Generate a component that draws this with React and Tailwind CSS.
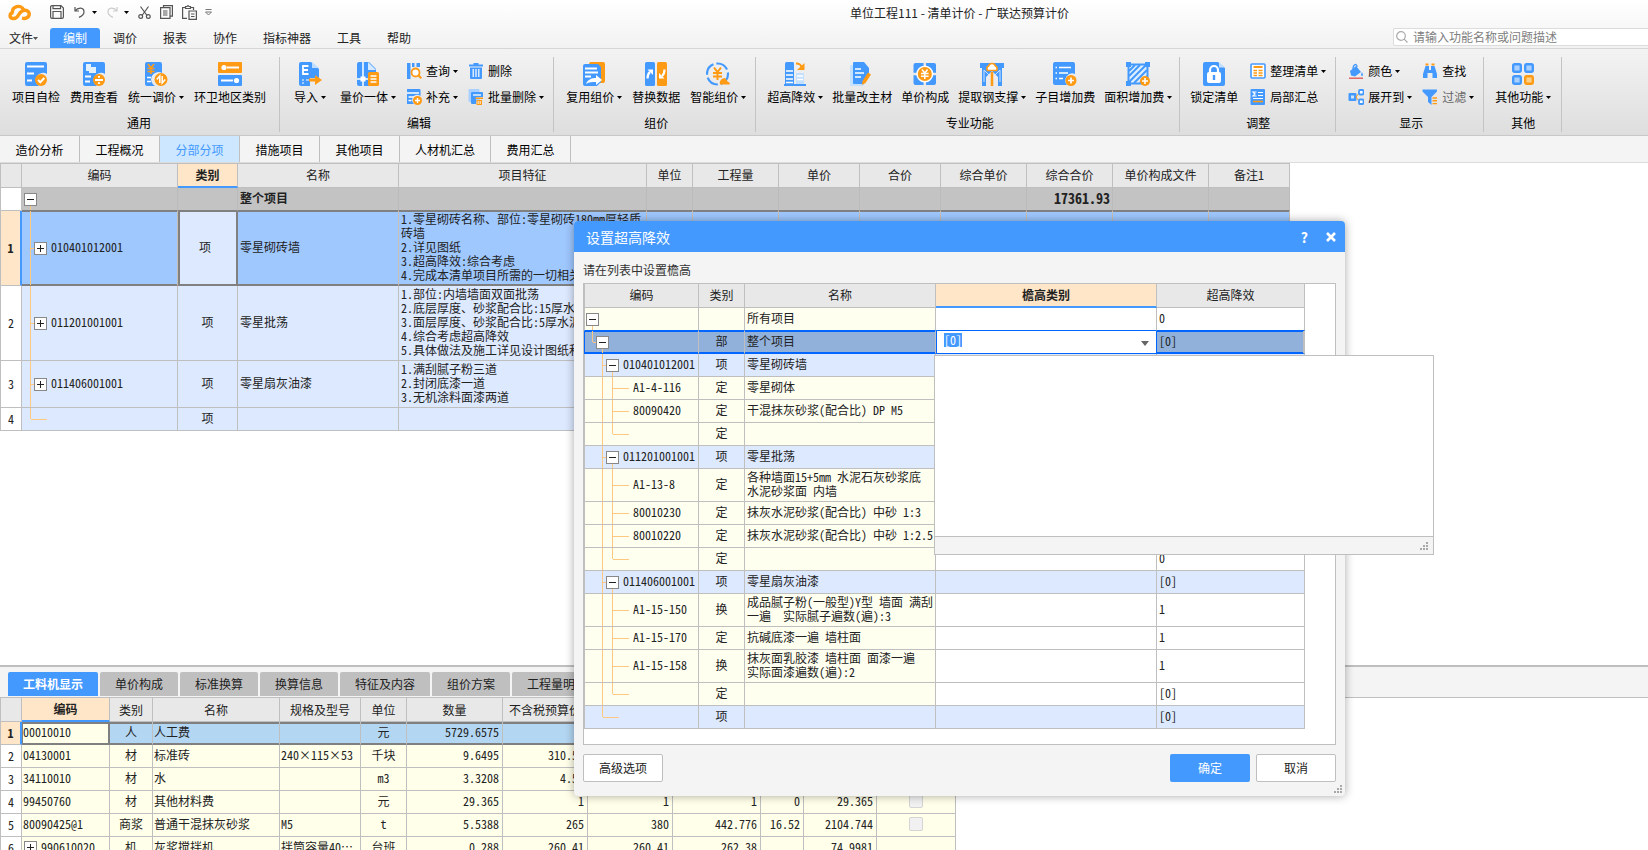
import { useState, useEffect, useRef } from "react";

const BLUE = "#4499ff";
const ORANGE = "#ff9a14";

const monoFont = "font-[family-name:'Noto_Sans_Mono_CJK_SC','Noto_Sans_CJK_SC',monospace]";

/* ---------- icons ---------- */

const bigIcons = {
    check: (
        <>
            <path d="M3 0h18a2 2 0 0 1 2 2v10a7 7 0 0 0-8 12H3a2 2 0 0 1-2-2V2a2 2 0 0 1 2-2z" fill={BLUE} />
            <path d="M3 4.500h17M3 11.500h7M3 18.500h5" stroke="#fff" strokeWidth="1.800" />
            <circle cx="17" cy="18" r="6" fill={ORANGE} />
            <path d="M14 18l2.300 2.300 4-4.300" stroke="#fff" strokeWidth="2" fill="none" />
        </>
    ),
    fee: (
        <>
            <path d="M3 0h18a2 2 0 0 1 2 2v10a7 7 0 0 0-8 12H3a2 2 0 0 1-2-2V2a2 2 0 0 1 2-2z" fill={BLUE} />
            <path d="M4 2h5v3h5v6H7V9H4z" fill="#e3f1ff" />
            <path d="M3 14.500h6M3 19.500h5" stroke="#fff" strokeWidth="1.800" />
            <circle cx="17" cy="18" r="6" fill={ORANGE} />
            <path d="M13 18h8M16 14.800h2M16 21.200h2" stroke="#fff" strokeWidth="1.800" />
        </>
    ),
    adjust: (
        <>
            <path d="M3 0h13a2 2 0 0 1 2 2v9a7 7 0 0 0-7 13H3a2 2 0 0 1-2-2V2a2 2 0 0 1 2-2z" fill={BLUE} />
            <path d="M4 2l3 4 3-4M7 6v6M3.500 6.500h7M3.500 9.500h7" stroke={ORANGE} strokeWidth="1.600" fill="none" />
            <path d="M3 15.500h4M3 19.500h4" stroke="#fff" strokeWidth="1.600" />
            <circle cx="17" cy="17.500" r="6.500" fill={ORANGE} />
            <path d="M15.800 21v-7l-3 3.500M18.200 14v7l3-3.500" stroke="#fff" strokeWidth="1.500" fill="none" />
        </>
    ),
    region: (
        <>
            <rect x="0" y="0" width="24" height="11" rx="1" fill={ORANGE} />
            <rect x="0" y="13" width="24" height="11" rx="1" fill={BLUE} />
            <circle cx="6" cy="5.500" r="2.600" fill="#fff" />
            <path d="M9 5.500h12M3 18.500h12" stroke="#fff" strokeWidth="2" />
            <circle cx="18.500" cy="18.500" r="2.600" fill="#fff" />
        </>
    ),
    importFile: (
        <>
            <path d="M3 0h10l8 7v9h-9v8H3a2 2 0 0 1-2-2V2a2 2 0 0 1 2-2z" fill={BLUE} />
            <path d="M14 0l7 6h-7z" fill="#bfddff" />
            <path d="M10.500 4H5v8h5.500M5 8h5" stroke="#fff" strokeWidth="1.800" fill="none" />
            <path d="M4 18h2M8 18h3M4 21h2" stroke="#bfddff" strokeWidth="1.600" />
            <path d="M11 16.500h6V13l7 5-7 5v-3.500h-6z" fill={ORANGE} />
        </>
    ),
    combine: (
        <>
            <path d="M3 0h10l7 7v17H3a2 2 0 0 1-2-2V2a2 2 0 0 1 2-2z" fill={BLUE} />
            <path d="M12 0l8 8h-8z" fill="#d6e9ff" />
            <path d="M7 0v24M1 17h5M9 17h4" stroke="#fff" strokeWidth="1.500" />
            <rect x="4.500" y="14.500" width="5" height="5" fill="#fff" />
            <rect x="12" y="10" width="11" height="14" rx="1.500" fill={ORANGE} />
            <path d="M14.500 14h6M14.500 17h6M14.500 20h6" stroke="#fff" strokeWidth="1.400" />
        </>
    ),
    reuse: (
        <>
            <rect x="7" y="0" width="16" height="21" rx="2" fill={ORANGE} />
            <path d="M3 2h13l3 3v15l-4 4H3a2 2 0 0 1-2-2V4a2 2 0 0 1 2-2z" fill={BLUE} />
            <path d="M3 6.500h12M3 10.500h13M3 14.500h6" stroke="#fff" strokeWidth="1.800" />
            <path d="M4 22c2-5 6-6 10-6v-3l6 5-6 5v-3c-4 0-7 0-10 2z" fill="#fff" />
        </>
    ),
    replace: (
        <>
            <rect x="1" y="0" width="10" height="24" rx="1.500" fill={BLUE} />
            <rect x="13" y="0" width="10" height="24" rx="1.500" fill={ORANGE} />
            <path d="M3.500 16.500c0-3 .5-5 2.500-6.500" stroke="#fff" strokeWidth="2.200" fill="none" />
            <path d="M3.500 7.500H9V13z" fill="#fff" />
            <path d="M20.500 7.500c0 3-.5 5-2.500 6.500" stroke="#fff" strokeWidth="2.200" fill="none" />
            <path d="M20.500 16.500H15V11z" fill="#fff" />
        </>
    ),
    smart: (
        <>
            <circle cx="11.500" cy="12" r="10.500" fill="none" stroke={BLUE} strokeWidth="2.200" strokeDasharray="13 3" />
            <path d="M8 5.500l3.500 4.500L15 5.500M11.500 10v8M7 11h9M7 14.500h9" stroke={ORANGE} strokeWidth="2" fill="none" />
            <path d="M14 22.500c-1-4 2-6 4.500-6.500 1 0 2 2 3 3.500 2 1 3 2 2 3z" fill={ORANGE} />
        </>
    ),
    tower: (
        <>
            <path d="M2 22V1.500Q2 0 3.500 0H10q1 0 1 1.500V22z" fill={BLUE} />
            <path d="M3 9h7M3 13h7M3 17h7M3 20.500h7" stroke="#fff" strokeWidth="1.500" />
            <path d="M13 22V11h8v11z" fill="#c4e0ff" />
            <path d="M14 14h6M14 17.500h6" stroke="#fff" strokeWidth="1.300" />
            <path d="M1 23h22" stroke={BLUE} strokeWidth="2" />
            <path d="M13 1.500c4 0 5 1 5.500 4" stroke={ORANGE} strokeWidth="2" fill="none" />
            <path d="M21.500 1v7H14z" fill={ORANGE} />
        </>
    ),
    editMain: (
        <>
            <rect x="0" y="3" width="14" height="21" rx="1.500" fill="#c4e0ff" />
            <path d="M4 0h10l5 6v7l-6 9H4a1 1 0 0 1-1-1V1a1 1 0 0 1 1-1z" fill={BLUE} />
            <path d="M5 7h6M5 11h9M5 15h6" stroke="#fff" strokeWidth="1.600" />
            <path d="M18 10.500l3 2-5.500 8.500-3.500 2 .5-4z" fill={ORANGE} />
        </>
    ),
    priceParts: (
        <>
            <rect x="0.500" y="1" width="22.500" height="22" rx="2" fill={BLUE} />
            <path d="M11.800 0v24M0 12h24" stroke="#e9e9e9" strokeWidth="2.500" />
            <circle cx="11.800" cy="12" r="7.800" fill={ORANGE} stroke="#fff" strokeWidth="1.500" />
            <path d="M9 7.500l2.800 3.500 2.800-3.500M11.800 11v6M8 11.500h7.600M8 14.200h7.600" stroke="#fff" strokeWidth="1.500" fill="none" />
        </>
    ),
    steel: (
        <>
            <path d="M0 1h24v5h-2v18h-4v-9l-6-6-6 6v9H2V6H0z" fill={BLUE} />
            <path d="M4 20V8l6 6M20 20V8l-6 6" stroke="#cfe5ff" strokeWidth="1" fill="none" />
            <path d="M12 10v14" stroke={ORANGE} strokeWidth="2.500" />
            <path d="M7.500 8.500a3 3 0 0 1 1-4.500 3.700 3.700 0 0 1 7 0 3 3 0 0 1 1 4.500z" fill="#fff" stroke={ORANGE} strokeWidth="1.700" />
        </>
    ),
    addItem: (
        <>
            <path d="M2 0h18a2 2 0 0 1 2 2v10a7 7 0 0 0-8 11H2a2 2 0 0 1-2-2V2a2 2 0 0 1 2-2z" fill={BLUE} />
            <path d="M2.500 5.500h1.500M6 5.500h12M2.500 11h1.500M6 11h9M2.500 16.500h1.500M6 16.500h4" stroke="#fff" strokeWidth="1.700" />
            <circle cx="18" cy="18.500" r="5.500" fill={ORANGE} />
            <path d="M15 18.500h6M18 15.500v6" stroke="#fff" strokeWidth="1.700" />
        </>
    ),
    area: (
        <>
            <path d="M2.500 2.500h19v19h-19z" fill="#ddeeff" stroke={BLUE} strokeWidth="2" />
            <path d="M3 9l6-6M3 14L14 3M3 20L20 3M8 21L21 8M14 21l7-7" stroke={BLUE} strokeWidth="2" />
            <path d="M0 0h5v5H0zM19 0h5v5h-5zM0 19h5v5H0z" fill={BLUE} />
            <circle cx="19" cy="19" r="5" fill={ORANGE} />
            <path d="M16 19h6M19 16v6" stroke="#fff" strokeWidth="1.600" />
        </>
    ),
    lock: (
        <>
            <path d="M3 0h13l7 6v16a2 2 0 0 1-2 2H3a2 2 0 0 1-2-2V2a2 2 0 0 1 2-2z" fill={BLUE} />
            <path d="M17 0l6 5.500h-6z" fill="#c4e0ff" />
            <rect x="5" y="10" width="14" height="11" rx="2" fill="#fff" />
            <path d="M8 11V8a4 4 0 0 1 8 0v3" stroke="#fff" strokeWidth="2.200" fill="none" />
            <path d="M12 13v5" stroke={BLUE} strokeWidth="2.400" />
        </>
    ),
    more: (
        <>
            <rect x="2.200" y="2.200" width="7.600" height="7.600" rx="1.500" fill="#a9d0ff" stroke={BLUE} strokeWidth="2.400" />
            <rect x="14.200" y="2.200" width="7.600" height="7.600" rx="1.500" fill="#a9d0ff" stroke={BLUE} strokeWidth="2.400" />
            <rect x="2.200" y="14.200" width="7.600" height="7.600" rx="1.500" fill="#a9d0ff" stroke={BLUE} strokeWidth="2.400" />
            <rect x="14.200" y="14.200" width="7.600" height="7.600" rx="1.500" fill="#ffd08a" stroke={ORANGE} strokeWidth="2.400" />
        </>
    ),
};

const smallIcons = {
    query: (
        <>
            <path d="M1 0h3.500v16H1zM6 0h2.500v4H6zM10.500 0H14v4h-3.500z" fill={BLUE} />
            <circle cx="9.500" cy="9.500" r="4" fill="#fff" stroke={ORANGE} strokeWidth="1.800" />
            <path d="M12.300 12.300l3 3" stroke={ORANGE} strokeWidth="2" />
        </>
    ),
    supplement: (
        <>
            <path d="M1 0h12.500a1 1 0 0 1 1 1v6A5 5 0 0 0 8 15H1z" fill={BLUE} />
            <path d="M1 4h12M2.500 8h6M2.500 11.500h3" stroke="#fff" strokeWidth="1.300" />
            <circle cx="11.500" cy="11.500" r="4.500" fill={ORANGE} />
            <path d="M9 11.500h5M11.500 9v5" stroke="#fff" strokeWidth="1.400" />
        </>
    ),
    trash: (
        <>
            <path d="M1 2.500h14M5.500 1h5" stroke={BLUE} strokeWidth="2" />
            <path d="M2 4.500h12V15a1 1 0 0 1-1 1H3a1 1 0 0 1-1-1z" fill={BLUE} />
            <path d="M5.200 6v8M8 6v8M10.800 6v8" stroke="#fff" strokeWidth="1.200" />
        </>
    ),
    batchTrash: (
        <>
            <rect x="0.500" y="0" width="11" height="13" rx="1" fill="#a9d0ff" />
            <path d="M4 3h10a1 1 0 0 1 1 1v4H8v7H4a1 1 0 0 1-1-1V4a1 1 0 0 1 1-1z" fill={BLUE} />
            <path d="M5 6h8" stroke="#fff" strokeWidth="1.300" />
            <path d="M7.500 8.500H15V10H7.500zM8.500 11H14v5H8.500z" fill={ORANGE} />
            <path d="M10.200 12v3M12.200 12v3" stroke="#fff" strokeWidth="0.900" />
        </>
    ),
    arrange: (
        <>
            <rect x="1" y="1" width="14" height="14" rx="1" fill="#fff" stroke={BLUE} strokeWidth="1.600" />
            <path d="M3.500 4h9" stroke={ORANGE} strokeWidth="2" />
            <path d="M3.500 7.500h3.500M3.500 10h3.500M3.500 12.500h3.500M8.500 7.500h4M8.500 10h4M8.500 12.500h4" stroke={ORANGE} strokeWidth="1.400" />
        </>
    ),
    partSum: (
        <>
            <rect x="0.500" y="0" width="14.500" height="16" rx="1" fill={BLUE} />
            <path d="M6.500 3H3l2 2-2 2h3.500M8 3.500h5M8 6.500h5M3 9.500h10" stroke="#fff" strokeWidth="1.200" fill="none" />
            <path d="M3 12.500h10" stroke={ORANGE} strokeWidth="1.600" />
        </>
    ),
    color: (
        <>
            <path d="M2 8l6-5 5 6-6 4.500-4-1z" fill={BLUE} />
            <path d="M5 6c0-5 4-6 4-2" stroke={BLUE} strokeWidth="1.300" fill="none" />
            <path d="M14 9c1 2 1.500 4 0 4s-1-2 0-4z" fill={BLUE} />
            <path d="M1 15.200h14" stroke="#e05252" strokeWidth="1.300" />
        </>
    ),
    expand: (
        <>
            <rect x="0.500" y="4" width="8" height="8" rx="1" fill={BLUE} />
            <rect x="3" y="6.500" width="3" height="3" fill="#cfe5ff" />
            <path d="M8 8l3-4M8 8l3 4" stroke={ORANGE} strokeWidth="1" />
            <rect x="11" y="1" width="4.500" height="4.500" rx="1" fill="#fff" stroke={BLUE} strokeWidth="1.800" />
            <rect x="11" y="10.500" width="4.500" height="4.500" rx="1" fill="#fff" stroke={BLUE} strokeWidth="1.800" />
        </>
    ),
    find: (
        <>
            <path d="M3.500 0.500h3v2h-3zM9.500 0.500h3v2h-3z" fill={ORANGE} />
            <path d="M3.500 3h3.500v4h2V3h3.500L15 11v4h-4.500v-5h-5v5H1v-4z" fill={BLUE} />
        </>
    ),
    filter: (
        <>
            <path d="M0.500 0.500h14.500v2L9.500 8v8L6 13V8L0.500 2.500z" fill={BLUE} />
            <path d="M10.500 9h4.500M10.500 11.800h4.500M10.500 14.600h4.500" stroke={ORANGE} strokeWidth="1.400" />
        </>
    ),
};

function Caret({ className = "text-black" }) {
    return (
        <svg className={`h-[3px] w-[5px] shrink-0 ${className}`} viewBox="0 0 5 3" aria-hidden="true">
            <path d="M0 0h5L2.500 3z" fill="currentColor" />
        </svg>
    );
}

function BigButton({ icon, label, caret }) {
    return (
        <button type="button" className="flex shrink-0 flex-col items-center gap-[3px]">
            <svg className="size-6" viewBox="0 0 24 24" aria-hidden="true">{bigIcons[icon]}</svg>
            <span className="flex items-center gap-[3px] whitespace-nowrap">
                {label}
                {caret && <Caret />}
            </span>
        </button>
    );
}

function SmallButton({ icon, label, caret, muted }) {
    return (
        <button type="button" className="flex shrink-0 items-center gap-1">
            <svg className="size-4" viewBox="0 0 16 16" aria-hidden="true">{smallIcons[icon]}</svg>
            <span className={`flex items-center gap-[3px] whitespace-nowrap ${muted ? "text-[#666]" : ""}`}>
                {label}
                {caret && <Caret />}
            </span>
        </button>
    );
}

function SmallColumn({ children }) {
    return <div className="flex flex-col gap-[10px] pt-px">{children}</div>;
}

function RibbonGroup({ title, className, itemsClass, children }) {
    return (
        <div className={`flex h-[75px] shrink-0 flex-col justify-between border-r border-[#c4c4c4] pt-[5px] pb-px ${className}`}>
            <div className={`flex items-start ${itemsClass}`}>{children}</div>
            <div className="text-center">{title}</div>
        </div>
    );
}

function Logo() {
    return (
        <svg className="h-[17px] w-[23px]" viewBox="0 0 23 17" fill="none" stroke={ORANGE} strokeWidth="3.400" aria-hidden="true">
            <path d="M14 14.200C22.500 16 23.500 6.500 17 6.300 13.500 6.200 12 8.500 10.500 11c-1.500 2.800-3.500 3.800-5.500 3.500C1 14 1 9 5.500 8.800" />
            <path d="M4.500 9C3.500 2 13 0 15.500 5.500" />
        </svg>
    );
}

function QuickBar() {
    const line = { fill: "none", stroke: "#555", strokeWidth: 1.2 };
    return (
        <div className="flex shrink-0 items-center pl-2">
            <Logo />
            <button type="button" aria-label="保存" className="ml-[19px]">
                <svg className="h-[14px] w-[14px]" viewBox="0 0 14 14" {...line}>
                    <path d="M.6 12V2A1.400 1.400 0 0 1 2 .6h9L13.400 3v9a1.400 1.400 0 0 1-1.400 1.400H2A1.400 1.400 0 0 1 .6 12zM3 .6v3h7.500v-3M3 13.400V6.500h8v6.900" />
                </svg>
            </button>
            <button type="button" aria-label="撤销" className="ml-[10px] flex items-center gap-[7px]">
                <svg className="h-3 w-[11px]" viewBox="0 0 11 12" {...line}>
                    <path d="M1 1v4h4M1 5c3-4 9-4 9 1 0 3-2 4-5 5.400" />
                </svg>
                <Caret />
            </button>
            <button type="button" aria-label="恢复" className="ml-[10px] flex items-center gap-[6px]">
                <svg className="h-3 w-[11px]" viewBox="0 0 11 12" fill="none" stroke="#ccc" strokeWidth="1.200">
                    <path d="M10 1v4H6M10 5C7 1 1 1 1 6c0 3 2 4 5 5.400" />
                </svg>
                <Caret />
            </button>
            <button type="button" aria-label="剪切" className="ml-[9px]">
                <svg className="h-[13px] w-[13px]" viewBox="0 0 13 13" {...line}>
                    <path d="M2.500.5l6.500 9M10.500.5L4 9.500" />
                    <circle cx="2.700" cy="10.500" r="1.900" />
                    <circle cx="10.300" cy="10.500" r="1.900" />
                </svg>
            </button>
            <button type="button" aria-label="复制" className="ml-[9px]">
                <svg className="h-[14px] w-[13px]" viewBox="0 0 13 14" {...line}>
                    <path d="M3.500 2.500V.6h8.900v10.500h-2.400M.6 2.700H10v10.700H.6zM3 6h4.500M3 8h4.500M3 10h4.500" />
                </svg>
            </button>
            <button type="button" aria-label="粘贴" className="ml-[9px]">
                <svg className="h-[15px] w-[15px]" viewBox="0 0 15 15" {...line}>
                    <path d="M5 13.400H.6V2.500H3.500M8.500 2.500h3V5M3.500 3.500v-2h1.500L6 .6 7 1.500h1.500v2zM7 6h7.400v8.400H7zM9 9h3.500M9 11.500h3.500" />
                </svg>
            </button>
            <button type="button" aria-label="自定义" className="ml-2">
                <svg className="h-[7px] w-[7px]" viewBox="0 0 7 7" fill="none" stroke="#777">
                    <path d="M.5.5h6M.5 3h6L3.500 6z" />
                </svg>
            </button>
        </div>
    );
}

/* ---------- tree pieces ---------- */

const GUIDE = "bg-[#ffc880]";

function TreeBox({ open, down, up, label }) {
    return (
        <span className="flex h-full w-[13px] shrink-0 flex-col items-center">
            <span className={`w-px flex-1 ${up ? GUIDE : ""}`} />
            <button type="button" aria-label={label} className="flex size-[13px] items-center justify-center border border-[#888] bg-white">
                <svg className="size-[9px]" viewBox="0 0 9 9" stroke="#222">
                    <path d={open ? "M1 4.500h7" : "M1 4.500h7M4.500 1v7"} />
                </svg>
            </button>
            <span className={`w-px flex-1 ${down ? GUIDE : ""}`} />
        </span>
    );
}

// vertical guide; `last` stops it half way down the row
function Stem({ last }) {
    return <span className={`w-px shrink-0 self-start ${last ? "h-1/2" : "h-full"} ${GUIDE}`} />;
}

function Arm({ className }) {
    return <span className={`h-px shrink-0 self-center ${GUIDE} ${className}`} />;
}

/* ---------- main grid ---------- */

const mainCols = [
    { title: "", w: "w-[22px]" },
    { title: "编码", w: "w-[156px]" },
    { title: "类别", w: "w-[60px]" },
    { title: "名称", w: "w-[161px]" },
    { title: "项目特征", w: "w-[248px]" },
    { title: "单位", w: "w-[46px]" },
    { title: "工程量", w: "w-[86px]" },
    { title: "单价", w: "w-[81px]" },
    { title: "合价", w: "w-[81px]" },
    { title: "综合单价", w: "w-[86px]" },
    { title: "综合合价", w: "w-[86px]" },
    { title: "单价构成文件", w: "w-[96px]" },
    { title: "备注1", w: "w-[81px]" },
];

const mainRows = [
    {
        code: "010401012001",
        name: "零星砌砖墙",
        height: "h-[75px]",
        feature: "1.零星砌砖名称、部位:零星砌砖180mm厚轻质\n砖墙\n2.详见图纸\n3.超高降效:综合考虑\n4.完成本清单项目所需的一切相关工作",
    },
    {
        code: "011201001001",
        name: "零星批荡",
        height: "h-[75px]",
        feature: "1.部位:内墙墙面双面批荡\n2.底层厚度、砂浆配合比:15厚水泥砂浆\n3.面层厚度、砂浆配合比:5厚水泥砂浆\n4.综合考虑超高降效\n5.具体做法及施工详见设计图纸和规范",
    },
    {
        code: "011406001001",
        name: "零星扇灰油漆",
        height: "h-[47px]",
        feature: "1.满刮腻子粉三道\n2.封闭底漆一道\n3.无机涂料面漆两道",
    },
    { code: "", name: "", height: "h-[23px]", feature: "" },
];

function MainGrid() {
    const line = "border-r border-b border-[#bfbfbf] p-0";
    const total = "border-r border-b border-r-[#bbb] border-b-[#808080] p-0";
    const rest = mainCols.slice(5);

    return (
        <table className={`w-[1290px] table-fixed border-separate border-spacing-0 border-t border-[#bfbfbf] leading-[14px] text-[#222] ${monoFont}`}>
            <thead>
                <tr>
                    {mainCols.map((col, i) => (
                        <th
                            key={i}
                            className={`h-6 border-r border-[#bfbfbf] p-0 ${col.w} ${i === 0 ? "border-l" : ""} ${
                                i === 2 ? "border-b-2 border-b-[#4499ff] bg-[#ffe6c8] pb-px font-bold" : "border-b bg-[#e8e8e8] pb-[2px] font-normal"
                            }`}
                        >
                            {col.title}
                        </th>
                    ))}
                </tr>
            </thead>
            <tbody>
                <tr className="bg-[#c3c3c3] font-bold">
                    <td className="h-[23px] border-x border-b border-[#bfbfbf] bg-white p-0" />
                    <td className={`${total} h-[23px]`}>
                        <div className="flex h-full pl-[2px]">
                            <TreeBox open down label="折叠" />
                        </div>
                    </td>
                    <td className={total} />
                    <td className={`${total} pb-[2px] pl-[2px]`}>整个项目</td>
                    <td className={total} />
                    {rest.map((col) => (
                        <td key={col.title} className={`${total} pr-[2px] pb-[2px] text-right text-sm leading-[14px]`}>
                            {col.title === "综合合价" ? "17361.93" : ""}
                        </td>
                    ))}
                </tr>
                {mainRows.map((row, i) => {
                    const active = i === 0;
                    const cell = active
                        ? "border-r border-b border-r-[#c8bfb4] border-b-[#808080] bg-[#9fc8ff] p-0 shadow-[inset_0_1px_#808080,inset_0_-1px_#808080]"
                        : `${line} bg-[#dde9ff]`;
                    return (
                        <tr key={i}>
                            <td
                                className={`border-b border-l border-[#bfbfbf] p-0 text-center ${row.height} ${
                                    active ? "border-r-2 border-r-[#4499ff] bg-[#ffe6c8] font-bold" : "border-r bg-white"
                                }`}
                            >
                                {i + 1}
                            </td>
                            <td className={`${cell} ${row.height}`}>
                                <div className="flex h-full items-center pl-2">
                                    <Stem last={!row.code} />
                                    {row.code ? (
                                        <>
                                            <Arm className="w-[3px]" />
                                            <TreeBox label="展开" />
                                            <span className="pb-[2px] pl-1">{row.code}</span>
                                        </>
                                    ) : (
                                        <Arm className="w-4" />
                                    )}
                                </div>
                            </td>
                            <td
                                className={
                                    active
                                        ? "border-r-2 border-b border-l-2 border-[#808080] bg-[#dde9ff] p-0 pr-[6px] pb-[2px] text-center shadow-[inset_0_1px_#808080,inset_0_-1px_#808080]"
                                        : `${cell} pb-[2px] text-center`
                                }
                            >
                                项
                            </td>
                            <td className={`${cell} pb-[2px] pl-[2px]`}>{row.name}</td>
                            <td className={`${cell} pb-[2px] pl-[2px] whitespace-pre`}>{row.feature}</td>
                            {rest.map((col) => (
                                <td key={col.title} className={cell} />
                            ))}
                        </tr>
                    );
                })}
            </tbody>
        </table>
    );
}

/* ---------- bottom grid ---------- */

const detailTabs = ["工料机显示", "单价构成", "标准换算", "换算信息", "特征及内容", "组价方案", "工程量明细", "反查图形工程量", "说明信息"];

const detailCols = [
    { title: "", w: "w-[22px]" },
    { title: "编码", w: "w-[88px]" },
    { title: "类别", w: "w-[43px]" },
    { title: "名称", w: "w-[127px]" },
    { title: "规格及型号", w: "w-[81px]" },
    { title: "单位", w: "w-[46px]" },
    { title: "数量", w: "w-[96px]" },
    { title: "不含税预算价", w: "w-[85px]" },
    { title: "不含税市场价", w: "w-[85px]" },
    { title: "含税市场价", w: "w-[88px]" },
    { title: "税率", w: "w-[43px]" },
    { title: "合价", w: "w-[73px]" },
    { title: "是否暂估", w: "w-[79px]" },
];

const detailRows = [
    ["00010010", "人", "人工费", "", "元", "5729.6575", "1", "1", "1", "0", "5729.658", false],
    ["04130001", "材", "标准砖", "240×115×53", "千块", "9.6495", "310.53", "310.53", "319.85", "3", "2996.459", true],
    ["34110010", "材", "水", "", "m3", "3.3208", "4.58", "4.58", "4.72", "3", "15.209", true],
    ["99450760", "材", "其他材料费", "", "元", "29.365", "1", "1", "1", "0", "29.365", true],
    ["80090425@1", "商浆", "普通干混抹灰砂浆", "M5", "t", "5.5388", "265", "380", "442.776", "16.52", "2104.744", true],
    ["990610020", "机", "灰浆搅拌机", "拌筒容量40…", "台班", "0.288", "260.41", "260.41", "262.38", "", "74.9981", false],
];

function DetailGrid() {
    return (
        <table className={`w-[956px] table-fixed border-separate border-spacing-0 leading-[14px] text-[#222] ${monoFont}`}>
            <thead>
                <tr>
                    {detailCols.map((col, i) => (
                        <th
                            key={i}
                            className={`h-6 border-r border-[#bfbfbf] p-0 whitespace-nowrap ${col.w} ${i === 0 ? "border-l" : ""} ${
                                i === 1 ? "border-b-2 border-b-[#4499ff] bg-[#ffe6c8] font-bold" : "border-b bg-[#e8e8e8] font-normal"
                            }`}
                        >
                            {col.title}
                        </th>
                    ))}
                </tr>
            </thead>
            <tbody>
                {detailRows.map((row, i) => {
                    const active = i === 0;
                    const [code, kind, name, spec, unit, ...values] = row;
                    const numbers = values.slice(0, 6);
                    const hasCheck = values[6];
                    const cell = active
                        ? "border-r border-b border-r-[#bfbfbf] border-b-[#808080] bg-[#b3d6f2] p-0 pb-[2px] shadow-[inset_0_2px_#808080,inset_0_-1px_#808080]"
                        : "border-r border-b border-[#bfbfbf] bg-[#ffffea] p-0 pb-[2px]";
                    return (
                        <tr key={code} className="whitespace-nowrap">
                            <td
                                className={`h-[23px] border-b border-l border-[#bfbfbf] p-0 text-center ${
                                    active ? "border-r-2 border-r-[#4499ff] bg-[#ffe6c8] font-bold" : "border-r bg-white"
                                }`}
                            >
                                {i + 1}
                            </td>
                            {active ? (
                                <td className="border-r-2 border-b border-[#808080] bg-[#ffffea] p-0 pb-[2px] pl-px shadow-[inset_1px_2px_#808080,inset_0_-1px_#808080]">{code}</td>
                            ) : (
                                <td className={`${cell} h-[23px] pl-px`}>
                                    {code === "990610020" ? (
                                        <div className="flex h-full items-center gap-1 pl-px">
                                            <TreeBox label="展开" />
                                            {code}
                                        </div>
                                    ) : (
                                        code
                                    )}
                                </td>
                            )}
                            <td className={`${cell} text-center`}>{kind}</td>
                            <td className={`${cell} pl-px`}>{name}</td>
                            <td className={`${cell} pl-px`}>{spec}</td>
                            <td className={`${cell} text-center`}>{unit}</td>
                            {numbers.map((value, j) => (
                                <td key={j} className={`${cell} pr-[3px] text-right`}>{value}</td>
                            ))}
                            <td className={cell}>
                                {hasCheck && (
                                    <input
                                        type="checkbox"
                                        disabled
                                        aria-label={`${name} 是否暂估`}
                                        className="mx-auto block size-[14px] appearance-none rounded-[2px] border border-[#d5d5d5] bg-[#f1f1f1]"
                                    />
                                )}
                            </td>
                        </tr>
                    );
                })}
            </tbody>
        </table>
    );
}

/* ---------- dialog ---------- */

const dialogRows = [
    { level: "root", name: "所有项目", value: "0" },
    { level: "part", kind: "部", name: "整个项目", value: "[0]" },
    { level: "item", code: "010401012001", kind: "项", name: "零星砌砖墙", value: "[0]" },
    { level: "leaf", code: "A1-4-116", kind: "定", name: "零星砌体", value: "1" },
    { level: "leaf", code: "80090420", kind: "定", name: "干混抹灰砂浆(配合比) DP M5", value: "0" },
    { level: "leaf", last: true, kind: "定", value: "0" },
    { level: "item", code: "011201001001", kind: "项", name: "零星批荡", value: "[0]" },
    { level: "leaf", code: "A1-13-8", kind: "定", name: "各种墙面15+5mm 水泥石灰砂浆底\n水泥砂浆面 内墙", value: "1", tall: true },
    { level: "leaf", code: "80010230", kind: "定", name: "抹灰水泥砂浆(配合比) 中砂 1:3", value: "0" },
    { level: "leaf", code: "80010220", kind: "定", name: "抹灰水泥砂浆(配合比) 中砂 1:2.5", value: "0" },
    { level: "leaf", last: true, kind: "定", value: "0" },
    { level: "item", code: "011406001001", kind: "项", name: "零星扇灰油漆", value: "[0]" },
    { level: "leaf", code: "A1-15-150", kind: "换", name: "成品腻子粉(一般型)Y型 墙面 满刮\n一遍  实际腻子遍数(遍):3", value: "1", tall: true },
    { level: "leaf", code: "A1-15-170", kind: "定", name: "抗碱底漆一遍 墙柱面", value: "1" },
    { level: "leaf", code: "A1-15-158", kind: "换", name: "抹灰面乳胶漆 墙柱面 面漆一遍\n实际面漆遍数(遍):2", value: "1", tall: true },
    { level: "leaf", last: true, kind: "定", value: "[0]" },
    { level: "tail", kind: "项", value: "[0]" },
];

function CodeTree({ row }) {
    if (row.level === "root") {
        return (
            <div className="flex h-full pl-px">
                <TreeBox open down label="折叠" />
            </div>
        );
    }
    if (row.level === "part") {
        return (
            <div className="flex h-full pl-[7px]">
                <Stem last />
                <Arm className="w-[3px]" />
                <TreeBox open down label="折叠" />
            </div>
        );
    }
    if (row.level === "item") {
        return (
            <div className="flex h-full items-center pl-[17px]">
                <Stem />
                <Arm className="w-[3px]" />
                <TreeBox open down label="折叠" />
                <span className="pb-[2px] pl-1">{row.code}</span>
            </div>
        );
    }
    if (row.level === "tail") {
        return (
            <div className="flex h-full pl-[17px]">
                <Stem last />
                <Arm className="w-4" />
            </div>
        );
    }
    return (
        <div className="flex h-full items-center pl-[17px]">
            <Stem />
            <span className="w-[9px]" />
            <Stem last={row.last} />
            <Arm className="w-4" />
            <span className="pb-[2px] pl-1">{row.code}</span>
        </div>
    );
}

function Grip() {
    return (
        <svg className="size-2" viewBox="0 0 8 8" fill="#a8a8a8" aria-hidden="true">
            <path d="M6 0h2v2H6zM3 3h2v2H3zM6 3h2v2H6zM0 6h2v2H0zM3 6h2v2H3zM6 6h2v2H6z" />
        </svg>
    );
}

function HeightSelect() {
    const [value, setValue] = useState("[0]");
    const inputRef = useRef(null);

    useEffect(() => {
        inputRef.current.focus();
        inputRef.current.select();
    }, []);

    return (
        <div className="relative flex h-full items-start border border-t-0 border-[#0066ff] bg-white pt-[2px] pr-[7px] pl-[7px]">
            <input
                ref={inputRef}
                aria-label="檐高类别"
                value={value}
                onChange={(e) => setValue(e.target.value)}
                className="h-[14px] min-w-0 flex-1 bg-transparent leading-[14px] outline-none selection:bg-[#4499ff] selection:text-white"
            />
            <button type="button" aria-label="展开列表" className="self-center">
                <svg className="h-[5px] w-2" viewBox="0 0 8 5" fill="#666">
                    <path d="M0 0h8L4 5z" />
                </svg>
            </button>
            <div className="absolute top-6 -left-[3px] z-10 flex h-[200px] w-[500px] flex-col border border-[#bfbfbf] bg-white">
                <div className="flex-1" />
                <div className="flex h-[18px] items-center justify-end border-t border-[#bfbfbf] bg-[#f4f4f4] pr-[5px]">
                    <Grip />
                </div>
            </div>
        </div>
    );
}

function HeightDialog() {
    const head = "h-6 border-r border-b border-[#bfbfbf] bg-[#e8e8e8] p-0 pb-[2px] font-normal";

    return (
        <div
            role="dialog"
            aria-labelledby="dialog-title"
            className="absolute top-[221px] left-[574px] w-[771px] rounded-[4px] bg-[#f4f4f4] shadow-[0_0_10px_rgba(0,0,0,0.35)]"
        >
            <div className="flex h-[31px] items-center rounded-t-[4px] bg-[#4499ff] pr-2 pl-3 text-white">
                <h2 id="dialog-title" className="flex-1 text-sm">设置超高降效</h2>
                <button type="button" aria-label="帮助" className="mr-[17px] text-sm font-bold">?</button>
                <button type="button" aria-label="关闭">
                    <svg className="h-2.5 w-3" viewBox="0 0 12 10" stroke="#fff" strokeWidth="2.600">
                        <path d="M2 1l8 8M10 1L2 9" />
                    </svg>
                </button>
            </div>
            <div className="px-[9px] pb-[14px]">
                <p className="pt-[10px] pb-[5px] text-[#333]">请在列表中设置檐高</p>
                <div className="h-[462px] border border-[#bfbfbf] bg-white">
                    <table className={`w-[721px] table-fixed border-separate border-spacing-0 leading-[14px] text-[#222] ${monoFont}`}>
                        <thead>
                            <tr>
                                <th className={`${head} w-[115px] border-l`}>编码</th>
                                <th className={`${head} w-[46px]`}>类别</th>
                                <th className={`${head} w-[191px]`}>名称</th>
                                <th className="w-[221px] border-r border-b-2 border-r-[#bfbfbf] border-b-[#4499ff] bg-[#ffe6c8] p-0 pb-px font-bold">檐高类别</th>
                                <th className={`${head} w-[148px]`}>超高降效</th>
                            </tr>
                        </thead>
                        <tbody>
                            {dialogRows.map((row, i) => {
                                const active = row.level === "part";
                                const blueRow = row.level === "item" || row.level === "tail";
                                const line = active
                                    ? "border-r border-b border-r-[#bfbfbf] border-b-[#0066ff] bg-[#91b1db] shadow-[inset_0_1px_#0066ff,inset_0_-1px_#0066ff] p-0"
                                    : `border-r border-b border-r-[#bfbfbf] p-0 ${row.level === "root" ? "border-b-[#0066ff]" : "border-b-[#bfbfbf]"}`;
                                const left = active ? "" : blueRow ? "bg-[#dde9ff]" : "bg-[#fffff0]";
                                const right = active ? "" : blueRow ? "bg-[#dde9ff]" : "bg-white";
                                return (
                                    <tr key={i}>
                                        <td className={`${line} ${left} border-l ${active ? "border-l-[#0066ff]" : "border-l-[#bfbfbf]"} ${row.tall ? "h-[33px]" : "h-[23px]"}`}>
                                            <CodeTree row={row} />
                                        </td>
                                        <td className={`${line} ${left} pb-[2px] text-center`}>{row.kind}</td>
                                        <td className={`${line} ${left} pb-[2px] pl-[2px] whitespace-pre`}>{row.name}</td>
                                        {active ? (
                                            <td className="h-[23px] p-0">
                                                <HeightSelect />
                                            </td>
                                        ) : (
                                            <td className={`${line} ${right}`} />
                                        )}
                                        <td className={`${line} ${right} pb-[2px] pl-[2px] ${active ? "border-r-2 border-r-[#0066ff]" : ""}`}>{row.value}</td>
                                    </tr>
                                );
                            })}
                        </tbody>
                    </table>
                </div>
                <div className="flex gap-[6px] pt-[9px]">
                    <button type="button" className="h-7 w-20 rounded-[2px] border border-[#bfbfbf] bg-white text-[#222]">高级选项</button>
                    <span className="flex-1" />
                    <button type="button" className="h-7 w-20 rounded-[2px] bg-[#4499ff] text-white">确定</button>
                    <button type="button" className="h-7 w-20 rounded-[2px] border border-[#bfbfbf] bg-white text-[#222]">取消</button>
                </div>
            </div>
            <div className="absolute right-[3px] bottom-[3px]">
                <Grip />
            </div>
        </div>
    );
}

/* ---------- page ---------- */

const menus = ["编制", "调价", "报表", "协作", "指标神器", "工具", "帮助"];
const pageTabs = ["造价分析", "工程概况", "分部分项", "措施项目", "其他项目", "人材机汇总", "费用汇总"];

export default function App() {
    const [menu, setMenu] = useState("编制");
    const [pageTab, setPageTab] = useState("分部分项");
    const [detailTab, setDetailTab] = useState("工料机显示");

    return (
        <div className="relative flex h-screen flex-col overflow-hidden bg-white font-[family-name:'Noto_Sans_CJK_SC',sans-serif] text-xs text-black">
            <header className="shrink-0 border-b border-[#d6d6d6] bg-linear-to-b from-white to-[#f2f2f2]">
                <div className="flex h-7 items-center pb-1">
                    <QuickBar />
                    <h1 className="flex-1 pt-px pl-[59px] text-center text-[#222]">单位工程111 - 清单计价 - 广联达预算计价</h1>
                </div>
                <div className="flex h-5 items-center">
                    <button type="button" className="flex w-[50px] items-center pl-[9px] text-[#222]">
                        文件
                        <Caret className="text-[#555]" />
                    </button>
                    <nav className="flex h-full flex-1">
                        {menus.map((name) => (
                            <button
                                key={name}
                                type="button"
                                onClick={() => setMenu(name)}
                                className={`px-[13px] ${name === menu ? "rounded-t-[3px] bg-[#4499ff] text-white" : "text-[#222]"}`}
                            >
                                {name}
                            </button>
                        ))}
                    </nav>
                    <label className="flex h-[18px] w-[255px] items-center gap-[5px] self-start rounded-l-[2px] border border-r-0 border-[#dcdcdc] bg-white pl-[2px]">
                        <svg className="size-3 shrink-0" viewBox="0 0 12 12" fill="none" stroke="#aaa" strokeWidth="1.200">
                            <circle cx="5" cy="5" r="4.300" />
                            <path d="M8.200 8.200l3.300 3.300" />
                        </svg>
                        <input
                            type="text"
                            aria-label="搜索功能"
                            placeholder="请输入功能名称或问题描述"
                            className="h-4 min-w-0 flex-1 bg-transparent outline-none placeholder:text-[#808080]"
                        />
                    </label>
                </div>
            </header>

            <div className="flex h-[87px] shrink-0 border-b border-[#c8c8c8] bg-linear-to-b from-[#f3f3f3] to-[#dedede] pt-2">
                <RibbonGroup title="通用" className="pr-[13px] pl-3" itemsClass="gap-[10px]">
                    <BigButton icon="check" label="项目自检" />
                    <BigButton icon="fee" label="费用查看" />
                    <BigButton icon="adjust" label="统一调价" caret />
                    <BigButton icon="region" label="环卫地区类别" />
                </RibbonGroup>
                <RibbonGroup title="编辑" className="pr-[9px] pl-[14px]" itemsClass="gap-[10px]">
                    <div className="flex gap-[14px]">
                        <BigButton icon="importFile" label="导入" caret />
                        <BigButton icon="combine" label="量价一体" caret />
                    </div>
                    <SmallColumn>
                        <SmallButton icon="query" label="查询" caret />
                        <SmallButton icon="supplement" label="补充" caret />
                    </SmallColumn>
                    <SmallColumn>
                        <SmallButton icon="trash" label="删除" />
                        <SmallButton icon="batchTrash" label="批量删除" caret />
                    </SmallColumn>
                </RibbonGroup>
                <RibbonGroup title="组价" className="pr-[9px] pl-3" itemsClass="gap-[10px]">
                    <BigButton icon="reuse" label="复用组价" caret />
                    <BigButton icon="replace" label="替换数据" />
                    <BigButton icon="smart" label="智能组价" caret />
                </RibbonGroup>
                <RibbonGroup title="专业功能" className="pr-[7px] pl-[11px]" itemsClass="gap-[9px]">
                    <BigButton icon="tower" label="超高降效" caret />
                    <BigButton icon="editMain" label="批量改主材" />
                    <BigButton icon="priceParts" label="单价构成" />
                    <BigButton icon="steel" label="提取钢支撑" caret />
                    <BigButton icon="addItem" label="子目增加费" />
                    <BigButton icon="area" label="面积增加费" caret />
                </RibbonGroup>
                <RibbonGroup title="调整" className="pr-[9px] pl-[10px]" itemsClass="gap-3">
                    <BigButton icon="lock" label="锁定清单" />
                    <SmallColumn>
                        <SmallButton icon="arrange" label="整理清单" caret />
                        <SmallButton icon="partSum" label="局部汇总" />
                    </SmallColumn>
                </RibbonGroup>
                <RibbonGroup title="显示" className="pr-[9px] pl-3" itemsClass="gap-[10px]">
                    <SmallColumn>
                        <SmallButton icon="color" label="颜色" caret />
                        <SmallButton icon="expand" label="展开到" caret />
                    </SmallColumn>
                    <SmallColumn>
                        <SmallButton icon="find" label="查找" />
                        <SmallButton icon="filter" label="过滤" caret muted />
                    </SmallColumn>
                </RibbonGroup>
                <RibbonGroup title="其他" className="pr-[10px] pl-[11px]" itemsClass="">
                    <BigButton icon="more" label="其他功能" caret />
                </RibbonGroup>
            </div>

            <nav className="flex h-[27px] shrink-0 border-b border-[#dcdcdc] bg-[#f4f4f4]">
                {pageTabs.map((name) => (
                    <button
                        key={name}
                        type="button"
                        onClick={() => setPageTab(name)}
                        className={`min-w-20 border-r border-[#bfbfbf] px-[15px] pt-1 pb-[2px] ${name === pageTab ? "bg-[#cce7ff] text-[#4499ff]" : ""}`}
                    >
                        {name}
                    </button>
                ))}
            </nav>

            <main className="min-h-0 flex-1 overflow-hidden">
                <MainGrid />
            </main>

            <section className="h-[185px] shrink-0 overflow-hidden border-t-2 border-[#bfbfbf]">
                <div className="flex h-[31px] items-end gap-[2px] border-b border-[#bfbfbf] bg-[#f4f4f4] pb-px pl-2">
                    {detailTabs.map((name) => (
                        <button
                            key={name}
                            type="button"
                            onClick={() => setDetailTab(name)}
                            className={`h-6 rounded-t-[2px] px-[15px] ${name === detailTab ? "bg-[#4499ff] font-bold text-white" : "bg-[#bfbfbf] text-[#222]"}`}
                        >
                            {name}
                        </button>
                    ))}
                </div>
                <DetailGrid />
            </section>

            <HeightDialog />
        </div>
    );
}
